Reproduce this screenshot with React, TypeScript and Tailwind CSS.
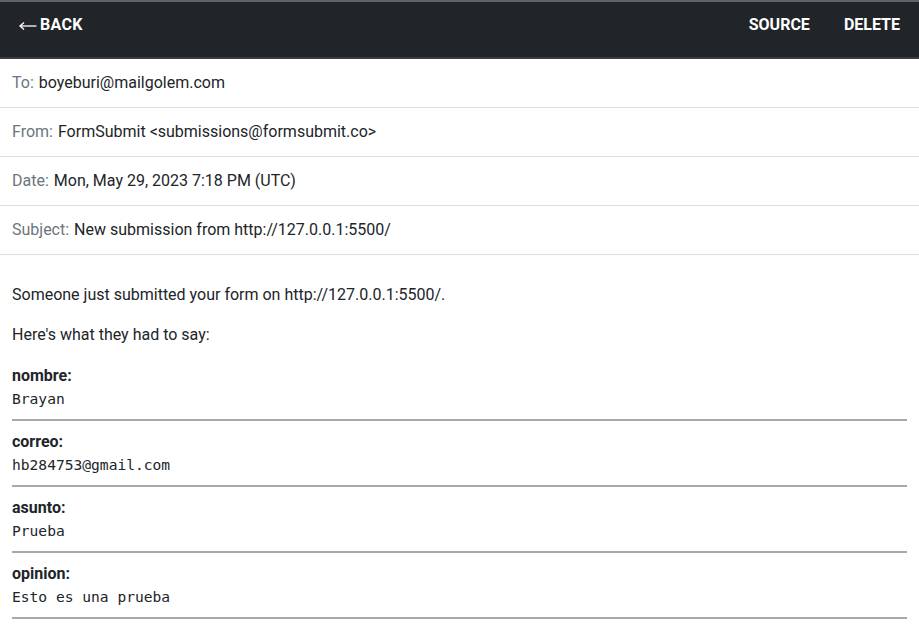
import React from "react";

const rows = [
  { k: "To:", v: "boyeburi@mailgolem.com" },
  { k: "From:", v: "FormSubmit <submissions@formsubmit.co>" },
  { k: "Date:", v: "Mon, May 29, 2023 7:18 PM (UTC)" },
  { k: "Subject:", v: "New submission from http://127.0.0.1:5500/" },
];

const fields = [
  { k: "nombre:", v: "Brayan" },
  { k: "correo:", v: "hb284753@gmail.com" },
  { k: "asunto:", v: "Prueba" },
  { k: "opinion:", v: "Esto es una prueba" },
];

export default function App() {
  return (
    <div className="w-[919px] h-[626px] overflow-hidden bg-white font-['Roboto',sans-serif] text-[16px] text-[#212529]">
      <div className="h-[59px] bg-[#212529] border-t-2 border-t-[#5f6266] border-b-2 border-b-[#393c40] flex items-start text-white font-bold uppercase">
        <div className="pl-[19px] pt-[13px] leading-[20px] flex items-center">
          <svg width="18" height="10" viewBox="0 0 18 10" className="mr-[3px] mt-[2px]" fill="none" stroke="white" strokeWidth="1.3">
            <path d="M1 5H17.5" />
            <path d="M5 1.5L1 5L5 8.5" />
          </svg>
          <span className="tracking-[0.3px]">BACK</span>
        </div>
        <div className="flex-1" />
        <div className="pt-[13px] leading-[20px] mr-[34px]">SOURCE</div>
        <div className="pt-[13px] leading-[20px] mr-[19px]">DELETE</div>
      </div>
      {rows.map((r) => (
        <div key={r.k} className="h-[49px] border-b border-[#dedede] flex items-center px-3 leading-[24px]">
          <span className="text-[#6c757d] mr-[5px]">{r.k}</span>
          <span>{r.v}</span>
        </div>
      ))}
      <div className="px-3 pt-[28px]">
        <p className="leading-[24px]">Someone just submitted your form on http://127.0.0.1:5500/.</p>
        <p className="leading-[24px] mt-[16px]">Here's what they had to say:</p>
        <div className="mt-[17px] w-[895px]">
          {fields.map((f) => (
            <div key={f.k}>
              <div className="font-bold leading-[24px]">{f.k}</div>
              <div className="font-['DejaVu_Sans_Mono',monospace] text-[14.6px] leading-[22px] h-[22px]">{f.v}</div>
              <div className="mt-[9px] mb-[9px] h-[2px] bg-[#a9a9a9]" />
            </div>
          ))}
        </div>
      </div>
    </div>
  );
}
